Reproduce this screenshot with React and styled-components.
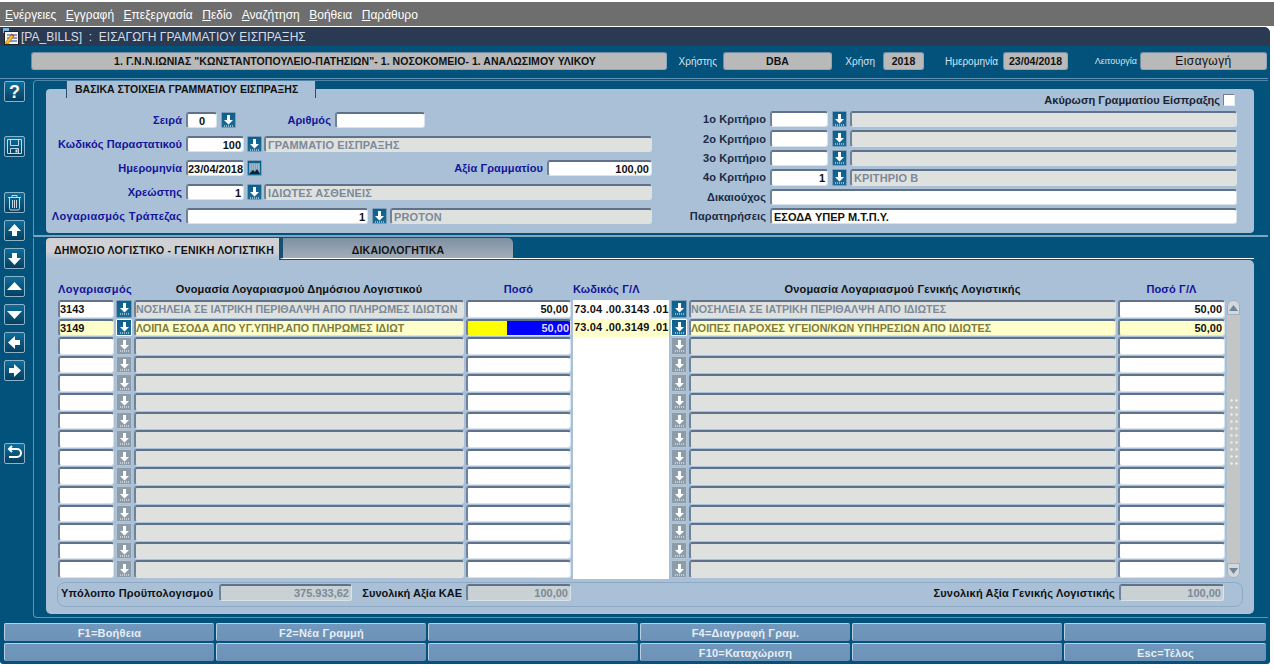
import styled, { createGlobalStyle } from "styled-components";

const GlobalStyle = createGlobalStyle`
html, body {
    margin: 0;
    padding: 0;
    background: #ffffff;
    font-family: "Liberation Sans", Arial, sans-serif;
}
* { box-sizing: border-box; }
`;

const Page = styled.div`
width: 1274px;
height: 668px;
padding-top: 2px;
display: flex;
flex-direction: column;
overflow: hidden;
`;

const MenuBar = styled.div`
height: 24px;
flex: none;
background: #6e6e6e;
display: flex;
align-items: center;
gap: 9.5px;
padding: 2px 0 0 5px;
font-size: 12px;
color: #ffffff;
`;

const MenuItem = styled.span`
& u { text-underline-offset: 1px; }
`;

const Window = styled.div`
margin-top: 1px;
width: 1270px;
height: 637px;
flex: none;
background: #03527c;
border-radius: 0 6px 3px 3px;
display: flex;
flex-direction: column;
overflow: hidden;
`;

const TitleBar = styled.div`
height: 19px;
flex: none;
background: #2a3a52;
display: flex;
align-items: center;
padding-left: 3px;
gap: 2px;
font-size: 12px;
color: #d6dde4;
white-space: pre;
`;

const HeaderStrip = styled.div`
height: 33px;
flex: none;
border-bottom: 1px solid #5f93b5;
display: flex;
align-items: flex-start;
padding: 6px 0 0 31px;
margin-right: 2px;
`;

const HeaderValue = styled.div`
width: ${(p) => p.$w}px;
height: 18px;
flex: none;
padding-left: ${(p) => p.$pl || 0}px;
background: #b9b9b9;
border-radius: 3px;
border: 1px solid #8aa9c1;
border-top-color: #6f8ca3;
border-left-color: #6f8ca3;
display: flex;
align-items: center;
justify-content: center;
font-size: ${(p) => (p.$plain ? "12px" : "10.5px")};
font-weight: ${(p) => (p.$plain ? 400 : 700)};
color: #111111;
white-space: nowrap;
letter-spacing: ${(p) => (p.$plain ? "0.4px" : "0.05px")};
`;

const HeaderLabel = styled.div`
width: ${(p) => p.$w}px;
height: 18px;
flex: none;
padding-right: ${(p) => p.$pr || 0}px;
display: flex;
align-items: center;
justify-content: flex-end;
font-size: ${(p) => p.$size || 10}px;
color: #d5e3ee;
white-space: nowrap;
`;

const Body = styled.div`
flex: 1;
display: flex;
min-height: 0;
`;

const ToolColumn = styled.div`
width: 33px;
flex: none;
padding: 2px 0 0 4px;
display: flex;
flex-direction: column;
`;

const ToolButton = styled.div`
width: 21px;
height: 21px;
flex: none;
margin-top: ${(p) => p.$top || 0}px;
border: 1px solid #8db3c9;
border-radius: 2px;
background: linear-gradient(#0b6d9c, #063f5f);
display: flex;
align-items: center;
justify-content: center;
color: #ffffff;
font-size: 18px;
font-weight: 700;
line-height: 1;
`;

const Sections = styled.div`
flex: 1;
min-width: 0;
padding-right: 2px;
`;

const UpperSection = styled.section`
position: relative;
margin-top: 1px;
height: 157px;
padding: 8px 14px 0 12px;
border-top: 1px solid #4d86aa;
border-left: 1px solid #5f93b5;
border-bottom: 2px solid #7ca6c2;
border-top-left-radius: 4px;
`;

const LegendTab = styled.div`
position: absolute;
left: 32px;
top: 0;
width: 250px;
height: 17px;
background: #a9c0d6;
border-left: 1px solid #26506f;
border-right: 1px solid #26506f;
display: flex;
align-items: center;
padding: 0 0 1px 8px;
font-size: 10.5px;
font-weight: 700;
color: #111111;
white-space: nowrap;
`;

const FormPanel = styled.div`
height: 144px;
background: #a9c0d6;
border-radius: 4px;
display: flex;
`;

const LeftForm = styled.div`
width: 606px;
flex: none;
padding-top: 23px;
display: flex;
flex-direction: column;
gap: 8px;
`;

const RightForm = styled.div`
width: 585px;
flex: none;
padding-top: 4px;
display: flex;
flex-direction: column;
gap: 3px;
`;

const CancelRow = styled.div`
height: 14px;
margin-bottom: 1px;
padding-right: 2px;
display: flex;
align-items: center;
justify-content: flex-end;
gap: 3px;
font-size: 11px;
font-weight: 700;
color: #1c2433;
`;

const CheckBox = styled.span`
width: 12px;
height: 12px;
background: #ffffff;
border: 1px solid #6c7f94;
border-bottom-color: #e5edf3;
border-right-color: #e5edf3;
`;

const FormRow = styled.div`
height: ${(p) => p.$h || 16}px;
display: flex;
align-items: stretch;
`;

const FormLabel = styled.label`
width: ${(p) => p.$w}px;
flex: ${(p) => (p.$grow ? "1" : "none")};
margin-right: 4px;
display: flex;
align-items: center;
justify-content: flex-end;
font-size: 11px;
font-weight: 700;
letter-spacing: ${(p) => p.$ls || 0.1}px;
color: ${(p) => (p.$dark ? "#1c2a44" : "#14149a")};
white-space: nowrap;
`;

const Field = styled.div`
width: ${(p) => (p.$w ? `${p.$w}px` : "auto")};
flex: ${(p) => (p.$w ? "none" : "1")};
min-width: 0;
background: ${(p) => (p.$yellow ? "#ffffcc" : p.$readonly ? "#dfe1df" : "#ffffff")};
border: 1px solid #d8e3ec;
border-top: 2px solid #5f728a;
border-left: 2px solid #6f8299;
border-radius: 3px;
display: flex;
align-items: center;
justify-content: ${(p) => (p.$right ? "flex-end" : p.$center ? "center" : "flex-start")};
padding: 0 2px;
font-size: 11px;
font-weight: 700;
color: ${(p) => (p.$readonly ? (p.$yellow ? "#7c7c3e" : "#7b8a99") : "#111111")};
letter-spacing: ${(p) => (p.$readonly ? "0.15px" : "0")};
white-space: nowrap;
overflow: hidden;
`;

const GridField = styled(Field)`
padding: 0 2px 0 0;
font-size: ${(p) => (p.$readonly ? "10.7px" : "11px")};
letter-spacing: 0;
`;

const LookupButton = styled.div`
width: ${(p) => p.$w || 15}px;
flex: none;
margin-left: ${(p) => p.$ml || 0}px;
margin-right: ${(p) => p.$mr || 0}px;
background: ${(p) => (p.$off ? "#8d9ca9" : "linear-gradient(#0c5f8c, #1c6b95)")};
border: 1px solid ${(p) => (p.$lit ? "#ffffff" : p.$off ? "#b4c4d2" : "#7b9db7")};
border-radius: 1px;
display: flex;
align-items: center;
justify-content: center;
`;

const LowerSection = styled.section`
margin-top: 1px;
height: 380px;
padding: 0 14px 3px 12px;
border-left: 1px solid #5f93b5;
border-bottom: 1px solid #5f93b5;
border-bottom-left-radius: 4px;
display: flex;
flex-direction: column;
`;

const TabRow = styled.div`
height: 22px;
flex: none;
display: flex;
`;

const ActiveTab = styled.div`
width: 233px;
background: linear-gradient(#cfd1d4 60%, #a9c0d6);
border-radius: 4px 0 0 0;
display: flex;
align-items: center;
padding: 2px 0 0 8px;
font-size: 10.5px;
font-weight: 700;
letter-spacing: 0.2px;
color: #111111;
white-space: nowrap;
`;

const InactiveTab = styled.div`
width: 234px;
height: 21px;
padding-top: 3px;
background: linear-gradient(#7f90a4, #a2adba);
border-left: 4px solid #174e72;
border-bottom: 1px solid #ffffff;
border-top-right-radius: 5px;
display: flex;
align-items: center;
justify-content: center;
font-size: 10.5px;
font-weight: 700;
letter-spacing: 0.2px;
color: #111111;
`;

const TabFiller = styled.div`
flex: 1;
height: 21px;
border-bottom: 1px solid #ffffff;
`;

const TablePanel = styled.div`
flex: 1;
background: #a9c0d6;
border-radius: 0 5px 5px 5px;
padding: 22px 0 0 12px;
display: flex;
flex-direction: column;
`;

const TableWrap = styled.div`
display: flex;
gap: 2px;
height: 296px;
flex: none;
`;

const Grid = styled.div`
display: grid;
grid-template-columns: 56px 16px 330px 105px 96px 16px 427px 107px;
grid-template-rows: 17px repeat(15, 17.6px);
column-gap: 2px;
row-gap: 1px;
`;

const HeadCell = styled.div`
grid-column: ${(p) => p.$span || "auto"};
display: flex;
align-items: center;
justify-content: ${(p) => (p.$left ? "flex-start" : "center")};
font-size: 11px;
font-weight: 700;
color: ${(p) => (p.$blue ? "#14149a" : "#111111")};
white-space: nowrap;
padding-bottom: 4px;
letter-spacing: ${(p) => p.$ls || 0.15}px;
`;

const CodeCell = styled.div`
background: ${(p) => (p.$yellow ? "#ffffcc" : "#ffffff")};
box-shadow: 0 1px 0 ${(p) => (p.$yellow ? "#ffffcc" : "#ffffff")};
display: flex;
align-items: center;
padding-left: 1px;
font-size: 11px;
font-weight: 700;
color: #111111;
white-space: pre;
letter-spacing: 0.15px;
`;

const Selection = styled.span`
flex: none;
width: 63px;
height: 100%;
padding-right: 1px;
background: #0000ff;
color: #dcdcff;
text-align: right;
line-height: 14px;
`;

const AmountField = styled(Field)`
padding: 0 2px 0 0;
&:has(span) {
    padding: 0;
    background: #ffff00;
}
`;

const ScrollBar = styled.div`
width: 13px;
margin-top: 18px;
background: #c4c6c6;
border-radius: 6px;
display: flex;
flex-direction: column;
justify-content: space-between;
align-items: center;
position: relative;
`;

const ScrollCap = styled.div`
width: 13px;
height: 15px;
background: #d3d8dc;
border: 1px solid #9fb0bf;
border-radius: ${(p) => (p.$down ? "0 0 6px 6px" : "6px 6px 0 0")};
display: flex;
align-items: center;
justify-content: center;
`;

const ScrollGrip = styled.div`
position: absolute;
top: 97px;
left: 2px;
width: 10px;
height: 68px;
background-image: radial-gradient(#e6e8e8 30%, transparent 36%);
background-size: 5px 7px;
`;

const Summary = styled.div`
width: 1186px;
height: 25px;
flex: none;
margin: 4px 0 0 -1px;
border: 1px solid #8ea9c3;
border-radius: 8px;
padding: 1px 18px 0 3px;
display: flex;
align-items: flex-start;
`;

const SummaryLabel = styled.div`
width: ${(p) => (p.$w ? `${p.$w}px` : "auto")};
flex: ${(p) => (p.$w ? "none" : "1")};
height: 17px;
margin-right: 4px;
display: flex;
align-items: center;
justify-content: ${(p) => (p.$left ? "flex-start" : "flex-end")};
font-size: 11px;
font-weight: 700;
letter-spacing: ${(p) => p.$ls || 0.18}px;
color: #111111;
white-space: nowrap;
`;

const SummaryValue = styled(Field)`
height: 17px;
letter-spacing: 0;
background: #c9d1d4;
`;

const Footer = styled.div`
height: 46px;
flex: none;
padding: 5px 4px 0;
display: grid;
grid-template-columns: repeat(5, 210px) 1fr;
grid-auto-rows: 18px;
column-gap: 2px;
row-gap: 2px;
`;

const FooterButton = styled.div`
background: linear-gradient(#7197bd, #6d92b6);
border-top: 1px solid #b8d0e2;
border-left: 1px solid #b8d0e2;
border-radius: 2px;
display: flex;
align-items: center;
justify-content: center;
font-size: 11px;
font-weight: 700;
letter-spacing: 0.2px;
color: #e6edf3;
white-space: nowrap;
`;

const ArrowIcon = () => (
    <svg width="13" height="13" viewBox="0 0 13 13">
        <path d="M5 1h3v5h3l-4.5 4.5L2 6h3z" fill="#fff" />
        <path d="M2 12h9" stroke="#fff" strokeWidth="1" strokeDasharray="1 1" />
    </svg>
);

const CalendarIcon = () => (
    <svg width="13" height="13" viewBox="0 0 13 13">
        <rect x="1" y="1" width="11" height="11" fill="#7ea2bd" />
        <path d="M2 3h9M2 5h9M2 7h9" stroke="#c4d4df" strokeDasharray="1 1" />
        <path d="M1 12l4-4 2 2 2-3 3 5z" fill="#10202c" />
    </svg>
);

const WindowIcon = () => (
    <svg width="16" height="17" viewBox="0 0 16 17">
        <rect x="0" y="0" width="6" height="5" fill="#7fb2d8" />
        <rect x="1.5" y="3.5" width="14" height="13" fill="#f4f4f4" stroke="#222" />
        <path d="M4 7h10M4 10h10M4 13h10" stroke="#2b3f9a" />
        <path d="M2 15l6-8 3 1-6 8z" fill="#f0c020" stroke="#8a5a10" strokeWidth=".5" />
        <path d="M8 6l3 2" stroke="#d03020" strokeWidth="1.5" />
    </svg>
);

const SaveIcon = () => (
    <svg width="17" height="17" viewBox="0 0 17 17" fill="none" stroke="#c8d8e2">
        <path d="M1.5 1.5h14v14h-14z" />
        <path d="M4.5 1.5v6h8v-6" />
        <path d="M4.5 15.5v-5h8v5" />
        <rect x="9.5" y="11.5" width="2" height="3" fill="#c8d8e2" stroke="none" />
    </svg>
);

const TrashIcon = () => (
    <svg width="15" height="17" viewBox="0 0 15 17" fill="none" stroke="#c8d8e2">
        <path d="M1 3.5h13M5 3V1.5h5V3" />
        <path d="M2.5 4v10.5a1.5 1.5 0 0 0 1.5 1.5h7a1.5 1.5 0 0 0 1.5-1.5V4" />
        <path d="M5.5 6v8M7.5 6v8M9.5 6v8" />
    </svg>
);

const BlockArrow = ({ points }) => (
    <svg width="17" height="17" viewBox="0 0 17 17">
        <polygon points={points} fill="#fff" />
    </svg>
);

const ReturnIcon = () => (
    <svg width="17" height="17" viewBox="0 0 17 17" fill="none" stroke="#fff" strokeWidth="2">
        <path d="M4 4h7a3.5 3.5 0 0 1 0 8H3" />
        <path d="M6 1L3 4l3 3" />
    </svg>
);

const SmallTriangle = ({ down }) => (
    <svg width="9" height="6" viewBox="0 0 9 6">
        <polygon points={down ? "0,0 9,0 4.5,6" : "4.5,0 9,6 0,6"} fill="#6f8498" />
    </svg>
);

const menus = ["Ενέργειες", "Εγγραφή", "Επεξεργασία", "Πεδίο", "Αναζήτηση", "Βοήθεια", "Παράθυρο"];

const criteria = [
    { label: "1ο Κριτήριο", code: "", name: "" },
    { label: "2ο Κριτήριο", code: "", name: "" },
    { label: "3ο Κριτήριο", code: "", name: "" },
    { label: "4ο Κριτήριο", code: "1", name: "ΚΡΙΤΗΡΙΟ Β" },
];

const lines = [
    {
        account: "3143",
        name: "ΝΟΣΗΛΕΙΑ ΣΕ ΙΑΤΡΙΚΗ ΠΕΡΙΘΑΛΨΗ ΑΠΟ ΠΛΗΡΩΜΕΣ ΙΔΙΩΤΩΝ",
        amount: "50,00",
        code: "73.04 .00.3143 .01",
        glName: "ΝΟΣΗΛΕΙΑ ΣΕ ΙΑΤΡΙΚΗ ΠΕΡΙΘΑΛΨΗ ΑΠΟ ΙΔΙΩΤΕΣ",
        glAmount: "50,00",
    },
    {
        account: "3149",
        name: "ΛΟΙΠΑ ΕΣΟΔΑ ΑΠΟ ΥΓ.ΥΠΗΡ.ΑΠΟ ΠΛΗΡΩΜΕΣ ΙΔΙΩΤ",
        amount: "50,00",
        code: "73.04 .00.3149 .01",
        glName: "ΛΟΙΠΕΣ ΠΑΡΟΧΕΣ ΥΓΕΙΟΝ/ΚΩΝ ΥΠΗΡΕΣΙΩΝ ΑΠΟ ΙΔΙΩΤΕΣ",
        glAmount: "50,00",
        current: true,
    },
    ...Array.from({ length: 13 }, () => ({ empty: true })),
];

const footerButtons = [
    "F1=Βοήθεια", "F2=Νέα Γραμμή", "", "F4=Διαγραφή Γραμ.", "", "",
    "", "", "", "F10=Καταχώριση", "", "Esc=Τέλος",
];

const Row = ({ line }) => {
    const yellow = !!line.current;
    return (
        <>
            <GridField $yellow={yellow}>{line.account}</GridField>
            <LookupButton $w={16} $off={line.empty} $lit={yellow}><ArrowIcon /></LookupButton>
            <GridField $readonly $yellow={yellow}>{line.name}</GridField>
            <AmountField $right>
                {yellow ? <Selection>{line.amount}</Selection> : line.amount}
            </AmountField>
            <CodeCell $yellow={yellow}>{line.code}</CodeCell>
            <LookupButton $w={16} $off={line.empty} $lit={yellow}><ArrowIcon /></LookupButton>
            <GridField $readonly $yellow={yellow}>{line.glName}</GridField>
            <GridField $right $yellow={yellow}>{line.glAmount}</GridField>
        </>
    );
};

const App = () => {
    return (
        <Page>
            <GlobalStyle />
            <MenuBar>
                {menus.map((m) => (
                    <MenuItem key={m}><u>{m[0]}</u>{m.slice(1)}</MenuItem>
                ))}
            </MenuBar>
            <Window>
                <TitleBar>
                    <WindowIcon />
                    {"[PA_BILLS]  :  ΕΙΣΑΓΩΓΗ ΓΡΑΜΜΑΤΙΟΥ ΕΙΣΠΡΑΞΗΣ"}
                </TitleBar>
                <HeaderStrip>
                    <HeaderValue $w={636} $pl={12}>1. Γ.Ν.Ν.ΙΩΝΙΑΣ "ΚΩΝΣΤΑΝΤΟΠΟΥΛΕΙΟ-ΠΑΤΗΣΙΩΝ"- 1. ΝΟΣΟΚΟΜΕΙΟ- 1. ΑΝΑΛΩΣΙΜΟΥ ΥΛΙΚΟΥ</HeaderValue>
                    <HeaderLabel $w={56} $pr={6}>Χρήστης</HeaderLabel>
                    <HeaderValue $w={109}>DBA</HeaderValue>
                    <HeaderLabel $w={51} $pr={8}>Χρήση</HeaderLabel>
                    <HeaderValue $w={41}>2018</HeaderValue>
                    <HeaderLabel $w={79} $pr={5}>Ημερομηνία</HeaderLabel>
                    <HeaderValue $w={65}>23/04/2018</HeaderValue>
                    <HeaderLabel $w={72} $pr={3} $size={9}>Λειτουργία</HeaderLabel>
                    <HeaderValue $w={127} $plain>Εισαγωγή</HeaderValue>
                </HeaderStrip>
                <Body>
                    <ToolColumn>
                        <ToolButton>?</ToolButton>
                        <ToolButton $top={34}><SaveIcon /></ToolButton>
                        <ToolButton $top={35}><TrashIcon /></ToolButton>
                        <ToolButton $top={7}><BlockArrow points="8.5,2 15,9 11,9 11,14 6,14 6,9 2,9" /></ToolButton>
                        <ToolButton $top={7}><BlockArrow points="8.5,15 15,8 11,8 11,3 6,3 6,8 2,8" /></ToolButton>
                        <ToolButton $top={7}><BlockArrow points="8.5,4 16,12 1,12" /></ToolButton>
                        <ToolButton $top={7}><BlockArrow points="8.5,13 16,5 1,5" /></ToolButton>
                        <ToolButton $top={7}><BlockArrow points="2,8.5 9,2 9,6 14,6 14,11 9,11 9,15" /></ToolButton>
                        <ToolButton $top={7}><BlockArrow points="15,8.5 8,2 8,6 3,6 3,11 8,11 8,15" /></ToolButton>
                        <ToolButton $top={62}><ReturnIcon /></ToolButton>
                    </ToolColumn>
                    <Sections>
                        <UpperSection>
                            <LegendTab>ΒΑΣΙΚΑ ΣΤΟΙΧΕΙΑ ΓΡΑΜΜΑΤΙΟΥ ΕΙΣΠΡΑΞΗΣ</LegendTab>
                            <FormPanel>
                                <LeftForm>
                                    <FormRow>
                                        <FormLabel $w={136}>Σειρά</FormLabel>
                                        <Field $w={31} $center>0</Field>
                                        <LookupButton $ml={4}><ArrowIcon /></LookupButton>
                                        <FormLabel $w={95}>Αριθμός</FormLabel>
                                        <Field $w={90} />
                                    </FormRow>
                                    <FormRow>
                                        <FormLabel $w={136}>Κωδικός Παραστατικού</FormLabel>
                                        <Field $w={58} $right>100</Field>
                                        <LookupButton $ml={3} $mr={2}><ArrowIcon /></LookupButton>
                                        <Field $readonly>ΓΡΑΜΜΑΤΙΟ ΕΙΣΠΡΑΞΗΣ</Field>
                                    </FormRow>
                                    <FormRow>
                                        <FormLabel $w={136}>Ημερομηνία</FormLabel>
                                        <GridField $w={58}>23/04/2018</GridField>
                                        <LookupButton $ml={3}><CalendarIcon /></LookupButton>
                                        <FormLabel $grow>Αξία Γραμματίου</FormLabel>
                                        <Field $w={105} $right>100,00</Field>
                                    </FormRow>
                                    <FormRow>
                                        <FormLabel $w={136}>Χρεώστης</FormLabel>
                                        <Field $w={58} $right>1</Field>
                                        <LookupButton $ml={3} $mr={2}><ArrowIcon /></LookupButton>
                                        <Field $readonly>ΙΔΙΩΤΕΣ ΑΣΘΕΝΕΙΣ</Field>
                                    </FormRow>
                                    <FormRow>
                                        <FormLabel $w={136} $ls={0.3}>Λογαριασμός Τράπεζας</FormLabel>
                                        <Field $w={182} $right>1</Field>
                                        <LookupButton $ml={4} $mr={3}><ArrowIcon /></LookupButton>
                                        <Field $readonly>PROTON</Field>
                                    </FormRow>
                                </LeftForm>
                                <RightForm>
                                    <CancelRow>
                                        Ακύρωση Γραμματίου Είσπραξης
                                        <CheckBox />
                                    </CancelRow>
                                    {criteria.map((c) => (
                                        <FormRow key={c.label} $h={16.4}>
                                            <FormLabel $w={114} $dark>{c.label}</FormLabel>
                                            <Field $w={58} $right>{c.code}</Field>
                                            <LookupButton $ml={4} $mr={3}><ArrowIcon /></LookupButton>
                                            <Field $readonly>{c.name}</Field>
                                        </FormRow>
                                    ))}
                                    <FormRow $h={16.4}>
                                        <FormLabel $w={114} $dark>Δικαιούχος</FormLabel>
                                        <Field />
                                    </FormRow>
                                    <FormRow $h={16.4}>
                                        <FormLabel $w={114} $dark>Παρατηρήσεις</FormLabel>
                                        <Field>ΕΣΟΔΑ ΥΠΕΡ Μ.Τ.Π.Υ.</Field>
                                    </FormRow>
                                </RightForm>
                            </FormPanel>
                        </UpperSection>
                        <LowerSection>
                            <TabRow>
                                <ActiveTab>ΔΗΜΟΣΙΟ ΛΟΓΙΣΤΙΚΟ - ΓΕΝΙΚΗ ΛΟΓΙΣΤΙΚΗ</ActiveTab>
                                <InactiveTab>ΔΙΚΑΙΟΛΟΓΗΤΙΚΑ</InactiveTab>
                                <TabFiller />
                            </TabRow>
                            <TablePanel>
                                <TableWrap>
                                    <Grid>
                                        <HeadCell $span="1 / 3" $blue $ls={0.35}>Λογαριασμός</HeadCell>
                                        <HeadCell>Ονομασία Λογαριασμού Δημόσιου Λογιστικού</HeadCell>
                                        <HeadCell $blue>Ποσό</HeadCell>
                                        <HeadCell $blue $left>Κωδικός Γ/Λ</HeadCell>
                                        <HeadCell $span="7 / 8" $ls={0.2}>Ονομασία Λογαριασμού Γενικής Λογιστικής</HeadCell>
                                        <HeadCell $blue>Ποσό Γ/Λ</HeadCell>
                                        {lines.map((l, i) => (
                                            <Row key={i} line={l} />
                                        ))}
                                    </Grid>
                                    <ScrollBar>
                                        <ScrollCap><SmallTriangle /></ScrollCap>
                                        <ScrollGrip />
                                        <ScrollCap $down><SmallTriangle down /></ScrollCap>
                                    </ScrollBar>
                                </TableWrap>
                                <Summary>
                                    <SummaryLabel $w={154} $left>Υπόλοιπο Προϋπολογισμού</SummaryLabel>
                                    <SummaryValue $readonly $right $w={133}>375.933,62</SummaryValue>
                                    <SummaryLabel $w={110} $ls={0.01}>Συνολική Αξία ΚΑΕ</SummaryLabel>
                                    <SummaryValue $readonly $right $w={105}>100,00</SummaryValue>
                                    <SummaryLabel>Συνολική Αξία Γενικής Λογιστικής</SummaryLabel>
                                    <SummaryValue $readonly $right $w={105}>100,00</SummaryValue>
                                </Summary>
                            </TablePanel>
                        </LowerSection>
                    </Sections>
                </Body>
                <Footer>
                    {footerButtons.map((b, i) => (
                        <FooterButton key={i}>{b}</FooterButton>
                    ))}
                </Footer>
            </Window>
        </Page>
    );
};

export default App;
